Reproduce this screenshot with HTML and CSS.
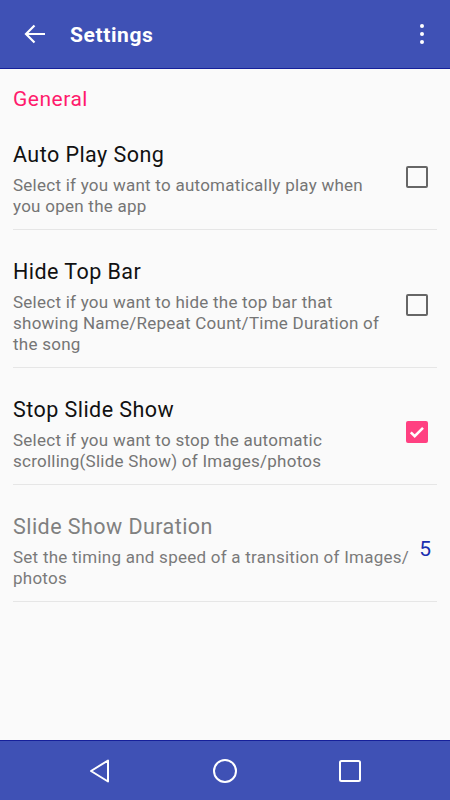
FILE: index.html
```html
<!DOCTYPE html>
<html lang="en">
<head>
    <meta charset="UTF-8">
    <meta name="viewport" content="width=device-width, initial-scale=1.0">
    <title>Settings</title>
    <link rel="stylesheet" href="styles.css">
</head>
<body>
    <header class="toolbar">
        <div class="back-btn">
            <svg width="24" height="24" viewBox="0 0 24 24">
                <path d="M22 12H3.5M11.5 3.5L3 12l8.5 8.5" fill="none" stroke="#fff" stroke-width="2.2"/>
            </svg>
        </div>
        <div class="title">Settings</div>
        <div class="overflow">
            <span></span>
            <span></span>
            <span></span>
        </div>
    </header>

    <main class="content">
        <div class="category">General</div>

        <div class="pref">
            <div class="pref-text">
                <div class="pref-title">Auto Play Song</div>
                <div class="pref-summary">Select if you want to automatically play when you open the app</div>
            </div>
            <div class="checkbox"></div>
        </div>

        <div class="pref">
            <div class="pref-text">
                <div class="pref-title">Hide Top Bar</div>
                <div class="pref-summary">Select if you want to hide the top bar that showing Name/Repeat Count/Time Duration of the song</div>
            </div>
            <div class="checkbox"></div>
        </div>

        <div class="pref">
            <div class="pref-text">
                <div class="pref-title">Stop Slide Show</div>
                <div class="pref-summary">Select if you want to stop the automatic scrolling(Slide Show) of Images/photos</div>
            </div>
            <div class="checkbox checked">
                <svg width="18" height="18" viewBox="0 0 18 18">
                    <path d="M2.8 9.3l3.9 3.9 8.3-8.3" fill="none" stroke="#fff" stroke-width="2.6"/>
                </svg>
            </div>
        </div>

        <div class="pref disabled">
            <div class="pref-text">
                <div class="pref-title">Slide Show Duration</div>
                <div class="pref-summary">Set the timing and speed of a transition of Images/<wbr>photos</div>
            </div>
            <div class="value">5</div>
        </div>
    </main>

    <footer class="navbar">
        <svg width="24" height="26" viewBox="0 0 24 26">
            <path d="M20 2.5v21L3 13z" fill="none" stroke="#fff" stroke-width="2" stroke-linejoin="round"/>
        </svg>
        <svg width="26" height="26" viewBox="0 0 26 26">
            <circle cx="13" cy="13" r="11" fill="none" stroke="#fff" stroke-width="2"/>
        </svg>
        <svg width="24" height="24" viewBox="0 0 24 24">
            <rect x="2" y="2" width="20" height="20" rx="1.5" fill="none" stroke="#fff" stroke-width="2"/>
        </svg>
    </footer>
</body>
</html>
```

FILE: styles.css
```css
body {
    margin: 0;
    padding: 0;
    font-family: Roboto, "Noto Sans", sans-serif;
    background: #fafafa;
    height: 800px;
    display: flex;
    flex-direction: column;
}

.toolbar {
    height: 68px;
    flex-shrink: 0;
    background: #3f51b5;
    border-bottom: 1px solid #16209a;
    display: flex;
    align-items: center;
    color: #fff;
}

.back-btn {
    width: 24px;
    height: 24px;
    margin-left: 23px;
    margin-right: 23px;
}

.back-btn svg {
    display: block;
}

.title {
    flex: 1;
    font-size: 21px;
    font-weight: bold;
    letter-spacing: 0.6px;
    padding-top: 1px;
}

.overflow {
    display: flex;
    flex-direction: column;
    gap: 3.5px;
    margin-right: 26px;
}

.overflow span {
    display: block;
    width: 4.5px;
    height: 4.5px;
    border-radius: 50%;
    background: #fff;
}

.content {
    flex: 1;
    padding: 0 13px;
}

.category {
    font-size: 21px;
    line-height: 24px;
    letter-spacing: 0.5px;
    color: #ff1a6c;
    padding-top: 18px;
    height: 26px;
}

.pref {
    display: flex;
    align-items: center;
    padding: 30px 0 12px;
    border-bottom: 1px solid #e6e6e6;
}

.pref-text {
    flex: 1;
}

.pref-title {
    font-size: 21.5px;
    line-height: 24px;
    letter-spacing: 0.45px;
    color: #111;
    margin-bottom: 8px;
}

.pref-summary {
    font-size: 17px;
    line-height: 21px;
    letter-spacing: 0.25px;
    color: #757575;
}

.checkbox {
    width: 18px;
    height: 18px;
    border: 2px solid #666;
    border-radius: 2px;
    margin: 0 9px 6px 16px;
}

.checkbox.checked {
    background: #ff4081;
    border-color: #ff4081;
}

.checkbox.checked svg {
    display: block;
}

.value {
    font-size: 21px;
    color: #1a2fb0;
    margin: 0 6px 6px 8px;
}

.disabled .pref-title {
    color: #808080;
}

.disabled .pref-summary {
    color: #7a7a7a;
}

.navbar {
    height: 59px;
    flex-shrink: 0;
    background: #3f51b5;
    border-top: 1px solid #16209a;
    display: flex;
    align-items: center;
    justify-content: center;
    gap: 100px;
}

.navbar svg {
    display: block;
}
```
